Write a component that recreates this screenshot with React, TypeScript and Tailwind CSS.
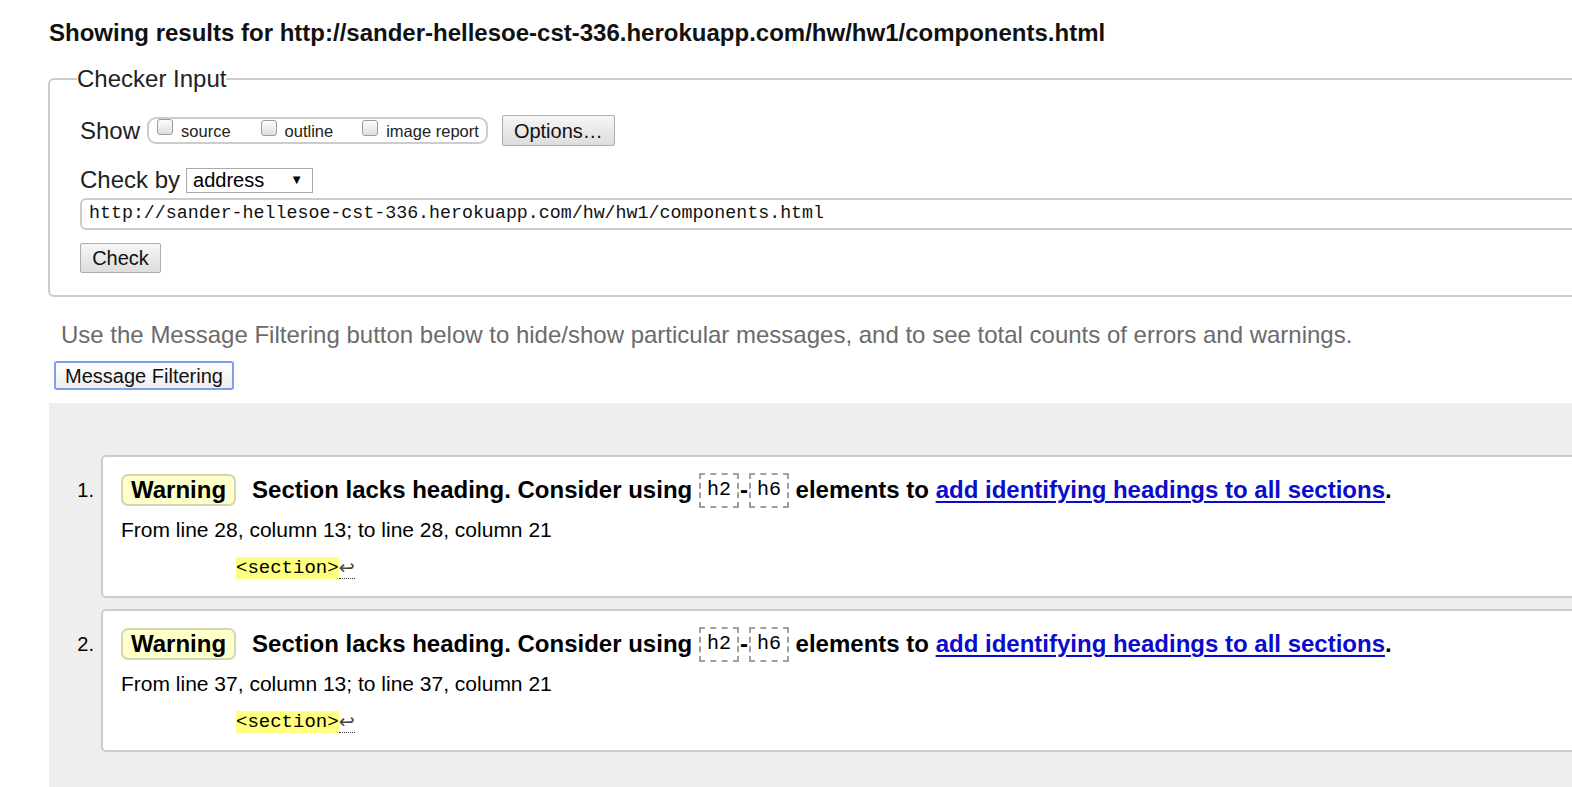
import React from "react";

const Checkbox = () => (
  <span className="mt-[0px] inline-block w-[16px] h-[16px] rounded-[3px] border border-[#9c9c9c] bg-gradient-to-b from-[#fdfdfd] to-[#dedede] shrink-0" />
);

const Code = ({ children }: { children: React.ReactNode }) => (
  <span className="inline-flex items-center h-[35px] px-[6px] border-2 border-dashed border-[#a0a0a0] font-['Liberation_Mono',monospace] font-normal text-[20px] align-middle">
    {children}
  </span>
);

const Message = ({ n, line }: { n: number; line: number }) => (
  <li className="flex">
    <div className="w-[52px] pr-[7px] pt-[21px] text-right text-[20px] leading-[28px]">{n}.</div>
    <div className="flex-1 border-2 border-[#cccccc] rounded-[5px] bg-white pl-[18px] pt-[16px] pb-[17px]">
      <div className="flex items-center h-[34px] whitespace-nowrap">
        <span className="inline-flex items-center h-[32px] px-[8px] border-2 border-[#d5d5b0] rounded-[7px] bg-[#ffffcc] text-[24px] font-bold leading-[28px]">
          Warning
        </span>
        <span className="ml-[16px] text-[24px] font-bold leading-[28px] flex items-center">
          <span>Section lacks heading. Consider using&nbsp;</span>
          <Code>h2</Code>
          <span className="mx-[1px]">-</span>
          <Code>h6</Code>
          <span>&nbsp;elements to&nbsp;</span>
          <a className="text-[#0b0bcc] underline decoration-2 underline-offset-[3px]" href="#">
            add identifying headings to all sections
          </a>
          <span>.</span>
        </span>
      </div>
      <div className="mt-[11px] text-[21px] leading-[24px]">
        From line {line}, column 13; to line {line}, column 21
      </div>
      <div className="mt-[15px] pl-[115px] flex items-end h-[22px]">
        <span className="bg-[#ffff80] font-['Liberation_Mono',monospace] text-[19px] leading-[22px] h-[22px]">
          &lt;section&gt;
        </span>
        <span className="border-b border-dotted border-[#333] font-['DejaVu_Sans',sans-serif] text-[19px] leading-[21px] text-[#444] h-[22px]">
          ↩
        </span>
      </div>
    </div>
  </li>
);

export default function App() {
  return (
    <div className="w-[1572px] h-[787px] overflow-hidden bg-white text-black font-['Liberation_Sans',Arial,sans-serif]">
      <div className="w-[1700px] pl-[48px]">
        <h2 className="pt-[19px] pl-[1px] text-[24px] leading-[28px] font-bold text-[#111]">
          Showing results for http://sander-hellesoe-cst-336.herokuapp.com/hw/hw1/components.html
        </h2>
        <fieldset className="mt-[18px] border-2 border-[#cccccc] rounded-[6px] pl-[30px] pr-[10px] pb-[22px]">
          <legend className="-ml-[3px] text-[24px] leading-[28px] text-[#222]">Checker Input</legend>
          <div className="mt-[22px] flex items-center h-[31px]">
            <span className="text-[24px] leading-[28px] text-[#222]">Show</span>
            <div className="ml-[7px] h-[27px] border-2 border-[#cccccc] rounded-[9px] flex items-start pl-[8px] pr-[7px] pt-[0px]">
              <Checkbox />
              <span className="ml-[8px] mt-[2px] text-[16.5px] leading-[20px] text-[#222]">source</span>
              <span className="ml-[30px]"><Checkbox /></span>
              <span className="ml-[8px] mt-[2px] text-[16.5px] leading-[20px] text-[#222]">outline</span>
              <span className="ml-[29px]"><Checkbox /></span>
              <span className="ml-[8px] mt-[2px] text-[16.5px] leading-[20px] text-[#222]">image report</span>
            </div>
            <button className="ml-[14px] h-[31px] w-[113px] border border-[#adadad] rounded-[2px] bg-gradient-to-b from-[#f6f6f6] to-[#dddddd] text-[20px] leading-[24px] text-[#111]">
              Options…
            </button>
          </div>
          <div className="mt-[20px] flex items-center h-[28px]">
            <span className="text-[24px] leading-[28px] text-[#222]">Check by</span>
            <div className="ml-[6px] h-[25px] w-[127px] border border-[#a9a9a9] bg-white flex items-center justify-between pl-[6px] pr-[9px]">
              <span className="text-[20px] leading-[24px]">address</span>
              <span className="text-[13px] leading-[16px]">▼</span>
            </div>
          </div>
          <div className="mt-[4px] h-[32px] border-2 border-[#cccccc] rounded-[6px] pl-[7px] flex items-center font-['Liberation_Mono',monospace] text-[18.3px] text-[#111]">
            http://sander-hellesoe-cst-336.herokuapp.com/hw/hw1/components.html
          </div>
          <button className="mt-[13px] h-[30px] w-[81px] border border-[#adadad] rounded-[2px] bg-gradient-to-b from-[#f6f6f6] to-[#dddddd] text-[20px] leading-[24px] text-[#111]">
            Check
          </button>
        </fieldset>
        <p className="mt-[24px] pl-[13px] text-[24px] leading-[28px] text-[#6b6b6b]">
          Use the Message Filtering button below to hide/show particular messages, and to see total counts of errors and warnings.
        </p>
        <button className="mt-[12px] ml-[6px] h-[29px] w-[180px] border-2 border-[#7aa3e6] rounded-[3px] bg-gradient-to-b from-[#ffffff] to-[#eeeeee] text-[20px] leading-[24px] text-[#111]">
          Message Filtering
        </button>
        <div className="mt-[13px] ml-[1px] bg-[#eeeeee] h-[500px] pt-[52px]">
          <ol className="flex flex-col gap-[11px]">
            <Message n={1} line={28} />
            <Message n={2} line={37} />
          </ol>
        </div>
      </div>
    </div>
  );
}
